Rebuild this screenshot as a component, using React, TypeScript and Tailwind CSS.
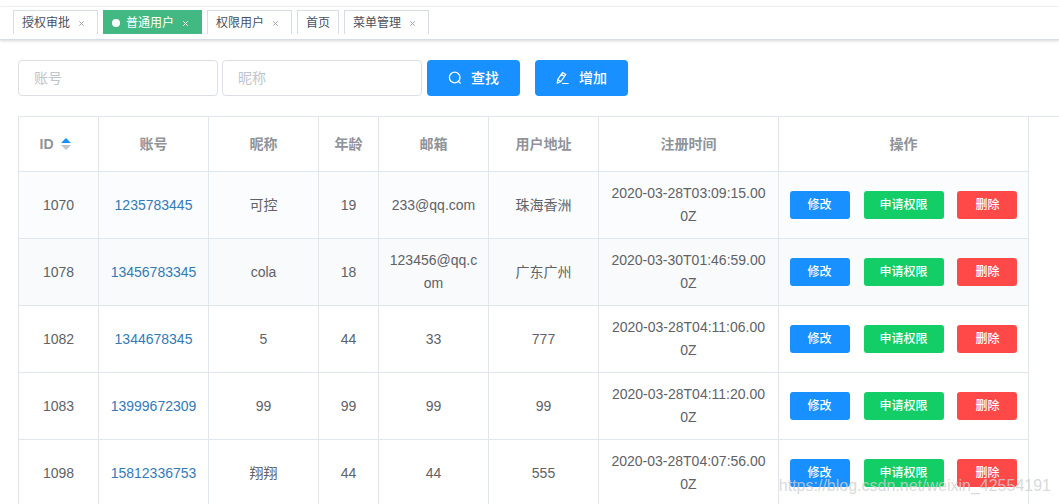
import { useState } from "react";

interface Tag {
  title: string;
  closable: boolean;
}

interface User {
  id: number;
  account: string;
  nickname: string;
  age: number;
  email: string;
  address: string;
  createTime: string;
}

const tags: Tag[] = [
  { title: "授权审批", closable: true },
  { title: "普通用户", closable: true },
  { title: "权限用户", closable: true },
  { title: "首页", closable: false },
  { title: "菜单管理", closable: true },
];

const users: User[] = [
  { id: 1070, account: "1235783445", nickname: "可控", age: 19, email: "233@qq.com", address: "珠海香洲", createTime: "2020-03-28T03:09:15.000Z" },
  { id: 1078, account: "13456783345", nickname: "cola", age: 18, email: "123456@qq.com", address: "广东广州", createTime: "2020-03-30T01:46:59.000Z" },
  { id: 1082, account: "1344678345", nickname: "5", age: 44, email: "33", address: "777", createTime: "2020-03-28T04:11:06.000Z" },
  { id: 1083, account: "13999672309", nickname: "99", age: 99, email: "99", address: "99", createTime: "2020-03-28T04:11:20.000Z" },
  { id: 1098, account: "15812336753", nickname: "翔翔", age: 44, email: "44", address: "555", createTime: "2020-03-28T04:07:56.000Z" },
];

const cell = "border-r border-b border-[#dfe6ec] px-2.5 py-2.5 break-all";
const rowBg = ["bg-[#fafcfe]", "bg-[#f8fafc]"];

function TagsView() {
  const [active, setActive] = useState("普通用户");

  return (
    <nav className="border-b border-[#d8dce5] pt-[3px] pl-[13px] shadow-[0_1px_3px_rgba(0,0,0,0.16)]">
      <div className="flex h-[29px] items-start">
        <div className="flex h-6 gap-[5px] overflow-hidden">
          {tags.map((tag) => {
            const on = tag.title === active;
            return (
              <div
                key={tag.title}
                className={`flex h-[26px] items-center border px-2 text-xs ${
                  on
                    ? "border-[#42b983] bg-[#42b983] text-white"
                    : "border-[#d8dce5] bg-white text-[#495060]"
                }`}
              >
                {on && <span className="mr-[6px] h-2 w-2 rounded-full bg-white" />}
                <button type="button" onClick={() => setActive(tag.title)}>
                  {tag.title}
                </button>
                {tag.closable && (
                  <button
                    type="button"
                    aria-label={`关闭${tag.title}`}
                    className={`ml-[3px] flex h-4 w-4 items-center justify-center ${on ? "text-white" : "text-[#a0a4ac]"}`}
                  >
                    <svg width="5" height="5" viewBox="0 0 5 5" stroke="currentColor">
                      <path d="M0.3 0.3L4.7 4.7M4.7 0.3L0.3 4.7" />
                    </svg>
                  </button>
                )}
              </div>
            );
          })}
        </div>
      </div>
    </nav>
  );
}

function SearchBar() {
  const input =
    "h-9 w-[200px] rounded border border-[#dcdfe6] bg-white px-[15px] text-sm text-[#606266] placeholder-[#c0c4cc] outline-none focus:border-[#1890ff]";
  const button =
    "flex h-9 items-center gap-[9px] rounded bg-[#1890ff] px-[21px] text-sm font-medium text-white";

  return (
    <form className="flex" onSubmit={(e) => e.preventDefault()}>
      <input type="text" aria-label="账号" placeholder="账号" className={input} />
      <input type="text" aria-label="昵称" placeholder="昵称" className={`ml-1 ${input}`} />
      <button type="submit" className={`ml-[5px] ${button}`}>
        <svg width="14" height="14" viewBox="0 0 14 14" fill="none" stroke="currentColor" strokeWidth="1.3">
          <circle cx="6.7" cy="6.5" r="5.3" />
          <path d="M10.4 10.4L12.6 12.5" />
        </svg>
        查找
      </button>
      <button type="button" className={`ml-[15px] ${button}`}>
        <svg width="14" height="14" viewBox="0 0 14 14" fill="none" stroke="currentColor" strokeWidth="1.2" strokeLinejoin="round">
          <path d="M1.3 12.2L1.8 8.4L6.7 1.4L9.8 3.5L4.9 10.5L1.3 12.2ZM5.4 3.3L8.5 5.4M1.8 8.4L4.9 10.5M6 12.5H12.6" />
        </svg>
        增加
      </button>
    </form>
  );
}

function UserTable() {
  const [asc, setAsc] = useState(true);
  const rows = [...users].sort((a, b) => (asc ? a.id - b.id : b.id - a.id));

  return (
    <div className="overflow-hidden border-t border-l border-[#dfe6ec]">
      <table className="w-[1010px] table-fixed border-separate border-spacing-0 text-center text-sm leading-[23px] text-[#606266]">
        <colgroup>
          <col className="w-20" />
          <col className="w-[110px]" />
          <col className="w-[110px]" />
          <col className="w-[60px]" />
          <col className="w-[110px]" />
          <col className="w-[110px]" />
          <col className="w-[180px]" />
          <col className="w-[250px]" />
        </colgroup>
        <thead className="text-[#909399]">
          <tr className="h-[55px]">
            <th className={cell} aria-sort={asc ? "ascending" : "descending"}>
              <button
                type="button"
                className="inline-flex items-center gap-[7px] font-bold"
                onClick={() => setAsc(!asc)}
              >
                ID
                <svg width="10" height="12" viewBox="0 0 10 12" className="mr-[7px]">
                  <path d="M5 0L10 5H0Z" fill={asc ? "#1890ff" : "#c0c4cc"} />
                  <path d="M5 12L10 7H0Z" fill={asc ? "#c0c4cc" : "#1890ff"} />
                </svg>
              </button>
            </th>
            <th className={cell}>账号</th>
            <th className={cell}>昵称</th>
            <th className={cell}>年龄</th>
            <th className={cell}>邮箱</th>
            <th className={cell}>用户地址</th>
            <th className={cell}>注册时间</th>
            <th className={cell}>操作</th>
          </tr>
        </thead>
        <tbody>
          {rows.map((user, i) => (
            <tr key={user.id} className={rowBg[i] ?? "bg-white"}>
              <td className={cell}>{user.id}</td>
              <td className={cell}>
                <a href="#" className="text-[#337ab7]">
                  {user.account}
                </a>
              </td>
              <td className={cell}>{user.nickname}</td>
              <td className={cell}>{user.age}</td>
              <td className={cell}>{user.email}</td>
              <td className={cell}>{user.address}</td>
              <td className={cell}>{user.createTime}</td>
              <td className={cell}>
                <button type="button" className="h-7 w-[60px] rounded-[3px] bg-[#1890ff] text-xs font-medium text-white">
                  修改
                </button>{" "}
                <button type="button" className="ml-2.5 h-7 w-20 rounded-[3px] bg-[#13ce66] text-xs font-medium text-white">
                  申请权限
                </button>{" "}
                <button type="button" className="ml-2.5 h-7 w-[60px] rounded-[3px] bg-[#ff4949] text-xs font-medium text-white">
                  删除
                </button>
              </td>
            </tr>
          ))}
        </tbody>
      </table>
    </div>
  );
}

export default function App() {
  return (
    <div className="relative h-screen overflow-hidden bg-white font-['Liberation_Sans','Noto_Sans_CJK_SC',sans-serif]">
      <div className="h-[7px] border-b border-[#f3f6f8]" />
      <TagsView />
      <main className="flex flex-col gap-5 pt-5 pl-[18px]">
        <SearchBar />
        <UserTable />
      </main>
      <p className="pointer-events-none absolute right-2 bottom-1.5 text-base text-[#d0d0d0]/80">
        https://blog.csdn.net/weixin_42554191
      </p>
    </div>
  );
}
